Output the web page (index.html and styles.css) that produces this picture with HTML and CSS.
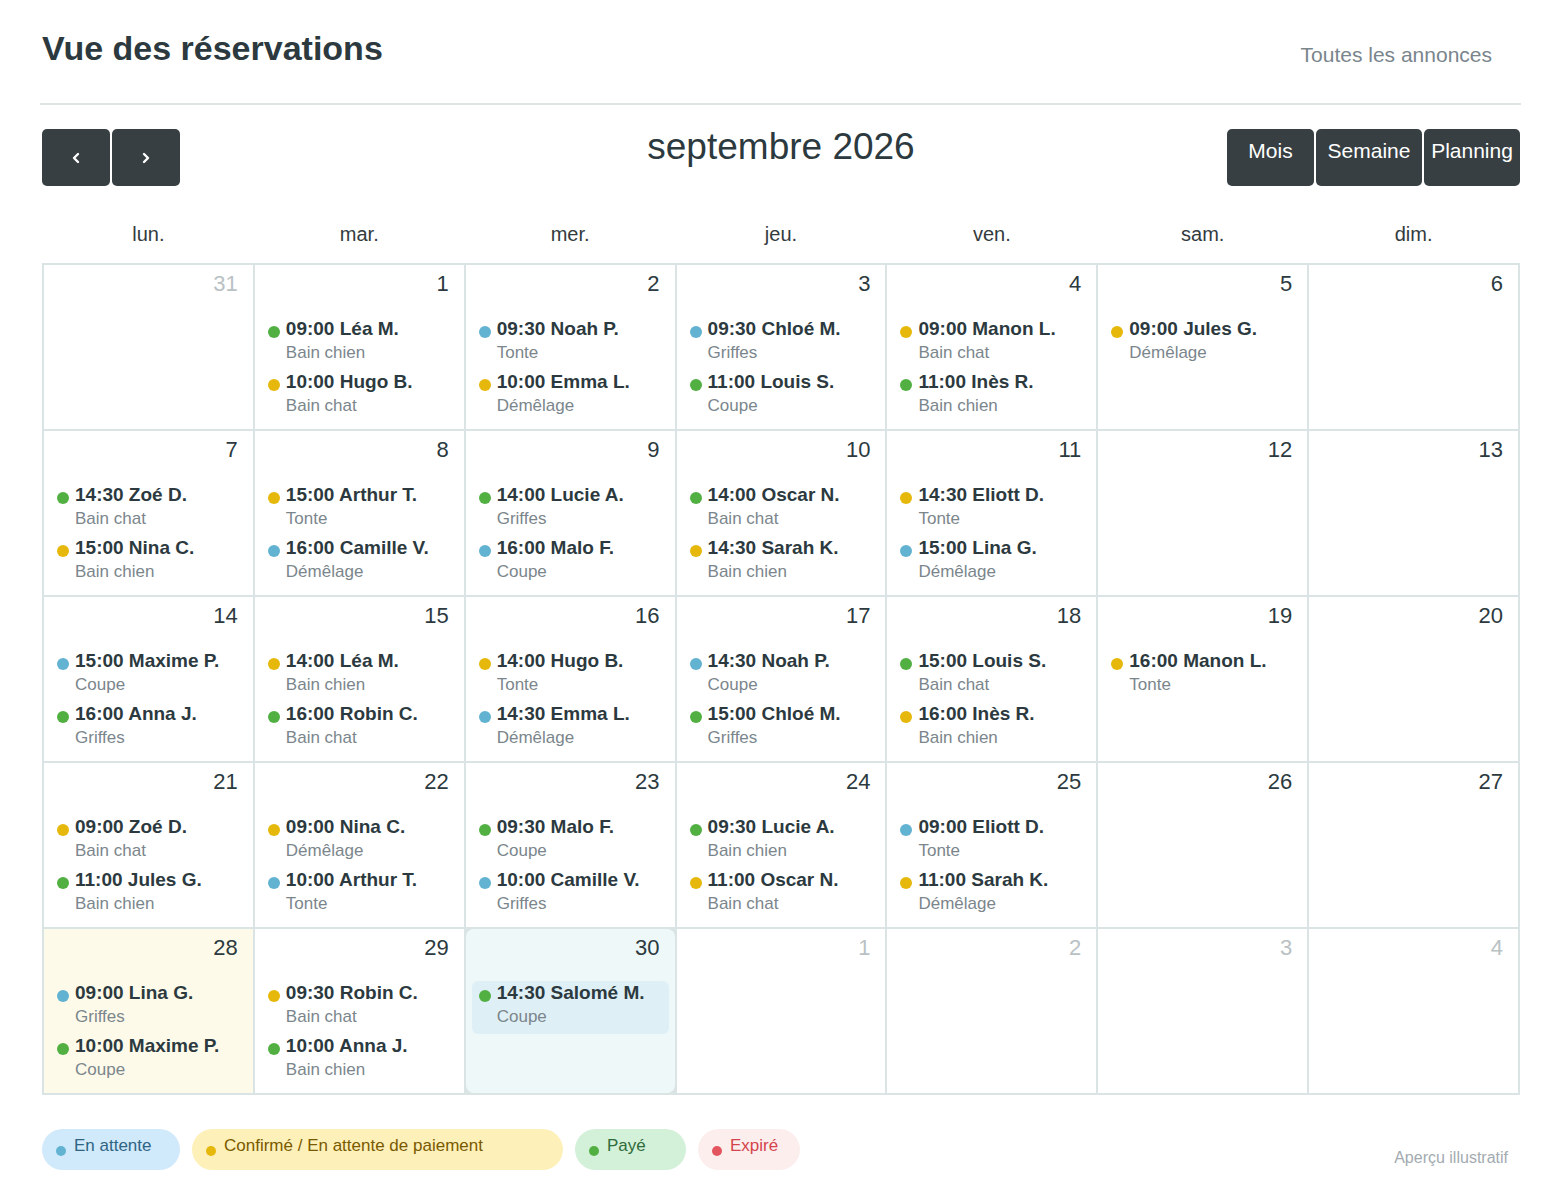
FILE: index.html
```html
<!DOCTYPE html>
<html lang="fr">
<head>
    <meta charset="UTF-8">
    <meta name="viewport" content="width=device-width, initial-scale=1.0">
    <title>Vue des réservations</title>
    <link rel="stylesheet" href="styles.css">
</head>
<body>

    <div class="page">
        <header class="page-header">
            <h1>Vue des réservations</h1>
            <a class="all-link" href="#">Toutes les annonces</a>
        </header>

        <!-- Barre de navigation du calendrier -->
        <div class="toolbar">
            <div class="btn-group">
                <button class="btn btn-nav" aria-label="Mois précédent">
                    <svg width="10" height="12" viewBox="0 0 10 12"><path d="M7 2 L3 6 L7 10" fill="none" stroke="#fff" stroke-width="2.4" stroke-linecap="round" stroke-linejoin="round"/></svg>
                </button>
                <button class="btn btn-nav" aria-label="Mois suivant">
                    <svg width="10" height="12" viewBox="0 0 10 12"><path d="M3 2 L7 6 L3 10" fill="none" stroke="#fff" stroke-width="2.4" stroke-linecap="round" stroke-linejoin="round"/></svg>
                </button>
            </div>
            <h2 class="month-title">septembre 2026</h2>
            <div class="btn-group views">
                <button class="btn btn-view btn-month">Mois</button>
                <button class="btn btn-view btn-week">Semaine</button>
                <button class="btn btn-view btn-plan">Planning</button>
            </div>
        </div>

        <!-- Jours de la semaine -->
        <div class="day-names">
            <div>lun.</div>
            <div>mar.</div>
            <div>mer.</div>
            <div>jeu.</div>
            <div>ven.</div>
            <div>sam.</div>
            <div>dim.</div>
        </div>

        <div class="month-grid" id="monthGrid"></div>

        <!-- Légende des statuts -->
        <footer class="legend-bar">
            <div class="legend">
                <span class="pill pill-pending"><i class="dot dot-blue"></i>En attente</span>
                <span class="pill pill-confirmed"><i class="dot dot-yellow"></i>Confirmé / En attente de paiement</span>
                <span class="pill pill-paid"><i class="dot dot-green"></i>Payé</span>
                <span class="pill pill-expired"><i class="dot dot-red"></i>Expiré</span>
            </div>
            <span class="preview-note">Aperçu illustratif</span>
        </footer>
    </div>

    <script>
        // Réservations du mois : jour -> [statut, heure, client, prestation]
        const bookings = {
            1: [['green', '09:00', 'Léa M.', 'Bain chien'], ['yellow', '10:00', 'Hugo B.', 'Bain chat']],
            2: [['blue', '09:30', 'Noah P.', 'Tonte'], ['yellow', '10:00', 'Emma L.', 'Démêlage']],
            3: [['blue', '09:30', 'Chloé M.', 'Griffes'], ['green', '11:00', 'Louis S.', 'Coupe']],
            4: [['yellow', '09:00', 'Manon L.', 'Bain chat'], ['green', '11:00', 'Inès R.', 'Bain chien']],
            5: [['yellow', '09:00', 'Jules G.', 'Démêlage']],
            7: [['green', '14:30', 'Zoé D.', 'Bain chat'], ['yellow', '15:00', 'Nina C.', 'Bain chien']],
            8: [['yellow', '15:00', 'Arthur T.', 'Tonte'], ['blue', '16:00', 'Camille V.', 'Démêlage']],
            9: [['green', '14:00', 'Lucie A.', 'Griffes'], ['blue', '16:00', 'Malo F.', 'Coupe']],
            10: [['green', '14:00', 'Oscar N.', 'Bain chat'], ['yellow', '14:30', 'Sarah K.', 'Bain chien']],
            11: [['yellow', '14:30', 'Eliott D.', 'Tonte'], ['blue', '15:00', 'Lina G.', 'Démêlage']],
            14: [['blue', '15:00', 'Maxime P.', 'Coupe'], ['green', '16:00', 'Anna J.', 'Griffes']],
            15: [['yellow', '14:00', 'Léa M.', 'Bain chien'], ['green', '16:00', 'Robin C.', 'Bain chat']],
            16: [['yellow', '14:00', 'Hugo B.', 'Tonte'], ['blue', '14:30', 'Emma L.', 'Démêlage']],
            17: [['blue', '14:30', 'Noah P.', 'Coupe'], ['green', '15:00', 'Chloé M.', 'Griffes']],
            18: [['green', '15:00', 'Louis S.', 'Bain chat'], ['yellow', '16:00', 'Inès R.', 'Bain chien']],
            19: [['yellow', '16:00', 'Manon L.', 'Tonte']],
            21: [['yellow', '09:00', 'Zoé D.', 'Bain chat'], ['green', '11:00', 'Jules G.', 'Bain chien']],
            22: [['yellow', '09:00', 'Nina C.', 'Démêlage'], ['blue', '10:00', 'Arthur T.', 'Tonte']],
            23: [['green', '09:30', 'Malo F.', 'Coupe'], ['blue', '10:00', 'Camille V.', 'Griffes']],
            24: [['green', '09:30', 'Lucie A.', 'Bain chien'], ['yellow', '11:00', 'Oscar N.', 'Bain chat']],
            25: [['blue', '09:00', 'Eliott D.', 'Tonte'], ['yellow', '11:00', 'Sarah K.', 'Démêlage']],
            28: [['blue', '09:00', 'Lina G.', 'Griffes'], ['green', '10:00', 'Maxime P.', 'Coupe']],
            29: [['yellow', '09:30', 'Robin C.', 'Bain chat'], ['green', '10:00', 'Anna J.', 'Bain chien']],
            30: [['green', '14:30', 'Salomé M.', 'Coupe']]
        };

        const today = 28;
        const selected = 30;

        function buildCell(day, otherMonth) {
            const cell = document.createElement('div');
            cell.classList.add('day');
            if (otherMonth) cell.classList.add('other');
            if (!otherMonth && day === today) cell.classList.add('today');
            if (!otherMonth && day === selected) cell.classList.add('selected');

            const num = document.createElement('div');
            num.classList.add('day-num');
            num.textContent = day;
            cell.appendChild(num);

            const list = (!otherMonth && bookings[day]) || [];
            list.forEach(b => {
                const ev = document.createElement('div');
                ev.classList.add('event');
                if (day === selected) ev.classList.add('active');
                ev.innerHTML = `<i class="dot dot-${b[0]}"></i>` +
                    `<span class="ev-title">${b[1]} ${b[2]}</span>` +
                    `<span class="ev-sub">${b[3]}</span>`;
                cell.appendChild(ev);
            });
            return cell;
        }

        const grid = document.getElementById('monthGrid');
        grid.appendChild(buildCell(31, true));
        for (let d = 1; d <= 30; d++) grid.appendChild(buildCell(d, false));
        for (let d = 1; d <= 4; d++) grid.appendChild(buildCell(d, true));
    </script>

</body>
</html>
```

FILE: styles.css
```css
/* Base */
body {
    margin: 0;
    font-family: "Liberation Sans", Arial, sans-serif;
    background-color: #ffffff;
    color: #2c3a40;
}

.page {
    padding: 0 40px 0 42px;
}

/* En-tête */
.page-header {
    display: flex;
    justify-content: space-between;
    align-items: flex-start;
    padding: 28px 0 34px;
    margin-left: -2px;
    padding-left: 2px;
    border-bottom: 2px solid #dde5e5;
    margin-right: -1px;
}

.page-header h1 {
    margin: 0;
    font-size: 34px;
    line-height: 40px;
    font-weight: bold;
    color: #2c3a40;
}

.all-link {
    margin: 13px 29px 0 0;
    font-size: 21px;
    line-height: 28px;
    color: #7a858c;
    text-decoration: none;
}

/* Barre d'outils */
.toolbar {
    display: grid;
    grid-template-columns: 1fr auto 1fr;
    margin-top: 24px;
    height: 57px;
}

.btn-group {
    display: flex;
    gap: 2px;
}

.btn-group.views {
    justify-self: end;
}

.btn {
    height: 57px;
    border: none;
    border-radius: 5px;
    background-color: #373f42;
    color: #ffffff;
    font-family: "Liberation Sans", Arial, sans-serif;
    cursor: pointer;
}

.btn-nav {
    width: 68px;
    display: flex;
    align-items: center;
    justify-content: center;
    padding: 0;
}

.btn-view {
    font-size: 21px;
    line-height: 24px;
    padding: 10px 0 23px;
    text-align: center;
}

.btn-month { width: 87px; }
.btn-week { width: 106px; }
.btn-plan { width: 96px; }

.month-title {
    margin: 0;
    font-size: 37px;
    line-height: 36px;
    font-weight: normal;
    color: #2c3a40;
}

/* Noms des jours */
.day-names {
    display: grid;
    grid-template-columns: repeat(7, 1fr);
    gap: 2px;
    padding: 36px 2px 17px;
}

.day-names div {
    text-align: center;
    font-size: 20px;
    line-height: 24px;
    color: #333b3e;
}

/* Grille du mois */
.month-grid {
    display: grid;
    grid-template-columns: repeat(7, 1fr);
    grid-auto-rows: 164px;
    gap: 2px;
    padding: 2px;
    background-color: #dbe4e4;
}

.day {
    background-color: #ffffff;
    padding: 6px 6px 6px;
    overflow: hidden;
}

.day.today {
    background-color: #fdfaea;
}

.day.selected {
    background-color: #eff8f8;
    border-radius: 8px;
}

.day-num {
    text-align: right;
    font-size: 22px;
    line-height: 26px;
    padding-right: 9px;
    margin-bottom: 20px;
    color: #2c3a40;
}

.day.other .day-num {
    color: #b9c1c4;
}

/* Réservations */
.event {
    display: grid;
    grid-template-columns: 12px 1fr;
    column-gap: 6px;
    padding: 0 6px 5px 7px;
    border-radius: 6px;
}

.event.active {
    background-color: #dfeff6;
}

.event .dot {
    grid-row: 1;
    margin-top: 9px;
}

.ev-title {
    grid-column: 2;
    font-size: 19px;
    line-height: 24px;
    font-weight: bold;
    color: #2c3a40;
    white-space: nowrap;
}

.ev-sub {
    grid-column: 2;
    font-size: 17px;
    line-height: 24px;
    color: #7b868c;
}

.dot {
    display: block;
    width: 12px;
    height: 12px;
    border-radius: 50%;
}

.dot-green { background-color: #52b043; }
.dot-yellow { background-color: #e6b80c; }
.dot-blue { background-color: #62b3d1; }
.dot-red { background-color: #e2555e; }

/* Légende */
.legend-bar {
    display: flex;
    justify-content: space-between;
    align-items: flex-start;
    margin-top: 34px;
}

.legend {
    display: flex;
    gap: 12px;
}

.pill {
    display: flex;
    align-items: flex-start;
    gap: 8px;
    height: 41px;
    box-sizing: border-box;
    padding: 6px 0 0 14px;
    border-radius: 21px;
    font-size: 17px;
    line-height: 22px;
}

.pill .dot {
    width: 10px;
    height: 10px;
    margin-top: 11px;
}

.pill-pending { width: 138px; background-color: #d0e9fb; color: #2f6483; }
.pill-confirmed { width: 371px; background-color: #fdf0b8; color: #7a5a00; }
.pill-paid { width: 111px; background-color: #d3f0d8; color: #2f6b3b; }
.pill-expired { width: 102px; background-color: #fdeeee; color: #d4444c; }

.preview-note {
    margin: 19px 12px 0 0;
    font-size: 16px;
    line-height: 20px;
    color: #a3abb0;
}
```
